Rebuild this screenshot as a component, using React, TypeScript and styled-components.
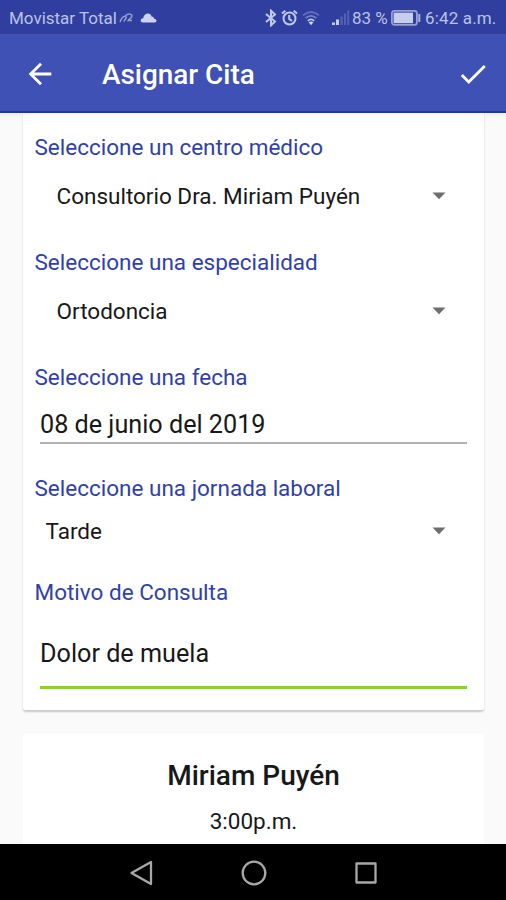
import React from 'react';
import styled, { createGlobalStyle } from 'styled-components';

const GlobalStyle = createGlobalStyle`
  * { box-sizing: border-box; }
  body { margin: 0; background: #fafafa; }
`;

const Screen = styled.div`
  width: 506px;
  height: 900px;
  display: flex;
  flex-direction: column;
  overflow: hidden;
  background: #fafafa;
  font-family: Roboto, 'Liberation Sans', sans-serif;
  color: #181818;
`;

const StatusBar = styled.header`
  height: 34px;
  flex: none;
  display: flex;
  align-items: center;
  padding: 2px 11px 0 9px;
  background: #303f9f;
  color: #bcc2e6;
  font-size: 17px;
  line-height: 32px;
  white-space: nowrap;
`;

const StatusText = styled.span<{ $width: number; $spacing?: number; $gap?: number }>`
  flex: none;
  width: ${(p) => p.$width}px;
  margin-left: ${(p) => p.$gap ?? 0}px;
  letter-spacing: ${(p) => p.$spacing ?? 0}px;
`;

const StatusIcon = styled.svg<{ $gap?: number }>`
  flex: none;
  display: block;
  margin-left: ${(p) => p.$gap ?? 0}px;
`;

const Spacer = styled.div`
  flex: 1;
`;

const AppBar = styled.div`
  height: 79px;
  flex: none;
  display: flex;
  align-items: center;
  padding: 2px 16px 0 23px;
  background: #3f51b5;
  border-bottom: 2px solid #1f38a4;
`;

const IconButton = styled.button`
  width: 34px;
  height: 34px;
  padding: 0;
  border: 0;
  background: none;
  display: block;
`;

const Title = styled.h1`
  flex: 1;
  margin: 3px 0 0 45px;
  font-size: 27.9px;
  font-weight: 500;
  line-height: 34px;
  color: #fff;
`;

const Content = styled.main`
  flex: 1;
  min-height: 0;
  overflow: hidden;
  padding: 0 22px 0 23px;
  background: linear-gradient(#efefef, #fafafa 5px);
`;

const FormCard = styled.section`
  height: 597px;
  padding: 19px 17px 0 11.5px;
  background: linear-gradient(#f5f5f3, #fff 5px);
  border-radius: 0 0 3px 3px;
  box-shadow: 0 2px 2px rgba(0, 0, 0, 0.2);
`;

const Label = styled.label<{ $top?: number }>`
  display: block;
  height: 30px;
  margin-top: ${(p) => p.$top ?? 0}px;
  font-size: 22.5px;
  line-height: 30px;
  color: #303fa9;
  white-space: nowrap;
`;

const Select = styled.div<{ $height: number; $indent: number }>`
  height: ${(p) => p.$height}px;
  padding: 0 21px 0 ${(p) => p.$indent}px;
  display: flex;
  align-items: center;
  justify-content: space-between;
  font-size: 22.5px;
  white-space: nowrap;
`;

const Input = styled.div<{ $height: number; $focused?: boolean; $lift: number }>`
  height: ${(p) => p.$height}px;
  margin-left: 5.5px;
  padding-bottom: ${(p) => p.$lift}px;
  display: flex;
  align-items: flex-end;
  font-size: 25.2px;
  line-height: 30px;
  border-bottom: ${(p) => (p.$focused ? '3px solid #88d132' : '2px solid #b2b2b2')};
`;

const ResultCard = styled.section`
  height: 130px;
  margin-top: 24px;
  padding-top: 25px;
  background: #fff;
  text-align: center;
`;

const DoctorName = styled.h2`
  margin: 0;
  font-size: 28px;
  font-weight: 500;
  line-height: 34px;
`;

const Hour = styled.div`
  margin-top: 13px;
  font-size: 22.5px;
  line-height: 30px;
`;

const NavBar = styled.nav`
  height: 56px;
  flex: none;
  display: flex;
  justify-content: center;
  align-items: center;
  gap: 84px;
  padding: 1px 0 0 2px;
  background: #000;
`;

const NavIcon = styled.svg`
  width: 28px;
  height: 28px;
  fill: none;
  stroke: #a8a8a8;
  stroke-width: 2.3;
  stroke-linejoin: round;
`;

const CaretIcon = styled.svg`
  display: block;
  flex: none;
  margin-top: 1px;
`;

const Caret = () => (
  <CaretIcon width="14" height="8" viewBox="0 0 14 8">
    <path d="M0.5 0.5H13.5L7 7.2Z" fill="#6e6e6e" />
  </CaretIcon>
);

const BluetoothIcon = () => (
  <StatusIcon width="12" height="18" viewBox="0 0 12 18" fill="none" stroke="#c2c8e9" strokeWidth="2">
    <path d="M1 5L10 12.5L6 16.3V1.7L10 5.5L1 13" />
  </StatusIcon>
);

const AlarmIcon = () => (
  <StatusIcon $gap={4} width="17" height="18" viewBox="0 0 17 18" fill="none" stroke="#c2c8e9" strokeWidth="2">
    <circle cx="8.5" cy="9.5" r="6" />
    <path d="M8.2 6V10L11 11.8M1 4.4L4.3 1.7M16 4.4L12.7 1.7" />
  </StatusIcon>
);

const WifiIcon = () => (
  <StatusIcon $gap={4} width="18" height="18" viewBox="0 0 18 18" fill="none" strokeWidth="1.7">
    <path d="M1 6.3Q9 -0.3 17 6.3" stroke="#6470bb" />
    <path d="M3.6 9.2Q9 4.6 14.4 9.2" stroke="#7883c7" />
    <path d="M5.8 11.8Q9 9 12.2 11.8" stroke="#c2c8e9" />
    <path d="M6.6 13.2Q9 11.6 11.4 13.2L9 16.2Z" fill="#d0d5f0" />
  </StatusIcon>
);

const SignalIcon = () => (
  <StatusIcon $gap={12} width="18" height="16" viewBox="0 0 18 16">
    <path d="M0 12.5H3V15H0Z M4 9.5H7V15H4Z" fill="#c8cdec" />
    <path d="M8.3 6.5H10.8V15H8.3Z M12 3.5H14V15H12Z M15.2 0.5H17.2V15H15.2Z" fill="#5360b2" />
  </StatusIcon>
);

const BatteryIcon = () => (
  <StatusIcon $gap={4} width="30" height="16" viewBox="0 0 30 16">
    <rect x="0.9" y="0.9" width="25" height="14" rx="2.4" fill="none" stroke="#98a1d5" strokeWidth="1.8" />
    <rect x="2.6" y="2.6" width="19.4" height="10.6" fill="#c8cdeb" />
    <path d="M28.3 4V12" stroke="#aab1dd" strokeWidth="2" />
  </StatusIcon>
);

export default function App() {
  return (
    <>
      <GlobalStyle />
      <Screen>
        <StatusBar>
          <StatusText $width={109}>Movistar Total</StatusText>
          <StatusIcon $gap={1} width="15" height="12" viewBox="0 0 15 12" fill="none" stroke="#959fd6" strokeWidth="1.5">
            <path d="M1 10C2.2 6.5 4.5 3.5 6.8 4.5C8.5 6 5.5 7.5 4.8 9.5M6.5 3.8C9 1.2 13.3 1.8 13 4.2C12.6 6.2 10.6 6.6 9.2 8.6H13" />
          </StatusIcon>
          <StatusIcon $gap={6} width="17" height="12" viewBox="0 0 17 12">
            <path d="M3 10.5C-0.3 10.5 0 6.3 3.2 6.2C4 0.4 10.8 0.3 11.5 4.4C13.3 4.3 14 5.4 14 6.7C17.3 6.8 17.2 10.5 14.2 10.5Z" fill="#cdd2ee" />
          </StatusIcon>
          <Spacer />
          <BluetoothIcon />
          <AlarmIcon />
          <WifiIcon />
          <SignalIcon />
          <StatusText $width={35} $gap={2}>83 %</StatusText>
          <BatteryIcon />
          <StatusText $width={70} $gap={4} $spacing={0.15}>6:42 a.m.</StatusText>
        </StatusBar>

        <AppBar>
          <IconButton aria-label="Atrás">
            <svg width="34" height="34" viewBox="0 0 24 24" fill="#fff">
              <path d="M20 11H7.83l5.59-5.59L12 4l-8 8 8 8 1.41-1.41L7.83 13H20v-2z" />
            </svg>
          </IconButton>
          <Title>Asignar Cita</Title>
          <IconButton aria-label="Confirmar">
            <svg width="34" height="34" viewBox="0 0 24 24" fill="#fff">
              <path d="M9 16.17L4.83 12l-1.42 1.41L9 19 21 7l-1.41-1.41z" />
            </svg>
          </IconButton>
        </AppBar>

        <Content>
          <FormCard>
            <Label>Seleccione un centro médico</Label>
            <Select $height={67} $indent={22}>Consultorio Dra. Miriam Puyén<Caret /></Select>
            <Label $top={18}>Seleccione una especialidad</Label>
            <Select $height={67} $indent={22}>Ortodoncia<Caret /></Select>
            <Label $top={18}>Seleccione una fecha</Label>
            <Input $height={52} $lift={2}>08 de junio del 2019</Input>
            <Label $top={29}>Seleccione una jornada laboral</Label>
            <Select $height={55} $indent={11}>Tarde<Caret /></Select>
            <Label $top={19}>Motivo de Consulta</Label>
            <Input $height={82} $lift={17} $focused>Dolor de muela</Input>
          </FormCard>
          <ResultCard>
            <DoctorName>Miriam Puyén</DoctorName>
            <Hour>3:00p.m.</Hour>
          </ResultCard>
        </Content>

        <NavBar>
          <NavIcon viewBox="0 0 28 28"><path d="M23 3V25L3.5 14Z" /></NavIcon>
          <NavIcon viewBox="0 0 28 28"><circle cx="14" cy="14" r="11.3" /></NavIcon>
          <NavIcon viewBox="0 0 28 28"><rect x="4.5" y="4.5" width="19" height="19" /></NavIcon>
        </NavBar>
      </Screen>
    </>
  );
}
